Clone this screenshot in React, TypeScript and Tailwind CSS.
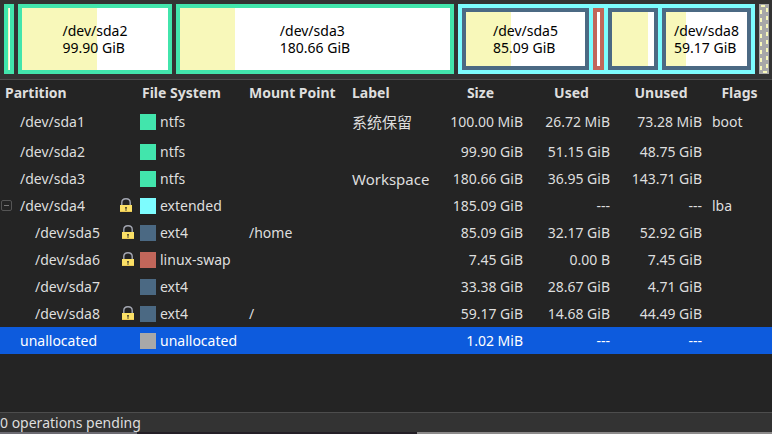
import { useState } from "react";

type Row = {
  name: string;
  child?: boolean;
  locked?: boolean;
  open?: boolean;
  swatch: string;
  fs: string;
  mount?: string;
  label?: string;
  size: string;
  used: string;
  unused: string;
  flags?: string;
};

const rows: Row[] = [
  { name: "/dev/sda1", swatch: "bg-[#42e5ac]", fs: "ntfs", label: "系统保留", size: "100.00 MiB", used: "26.72 MiB", unused: "73.28 MiB", flags: "boot" },
  { name: "/dev/sda2", swatch: "bg-[#42e5ac]", fs: "ntfs", size: "99.90 GiB", used: "51.15 GiB", unused: "48.75 GiB" },
  { name: "/dev/sda3", swatch: "bg-[#42e5ac]", fs: "ntfs", label: "Workspace", size: "180.66 GiB", used: "36.95 GiB", unused: "143.71 GiB" },
  { name: "/dev/sda4", locked: true, open: true, swatch: "bg-[#7dfcfe]", fs: "extended", size: "185.09 GiB", used: "---", unused: "---", flags: "lba" },
  { name: "/dev/sda5", child: true, locked: true, swatch: "bg-[#4b6983]", fs: "ext4", mount: "/home", size: "85.09 GiB", used: "32.17 GiB", unused: "52.92 GiB" },
  { name: "/dev/sda6", child: true, locked: true, swatch: "bg-[#c1665a]", fs: "linux-swap", size: "7.45 GiB", used: "0.00 B", unused: "7.45 GiB" },
  { name: "/dev/sda7", child: true, swatch: "bg-[#4b6983]", fs: "ext4", size: "33.38 GiB", used: "28.67 GiB", unused: "4.71 GiB" },
  { name: "/dev/sda8", child: true, locked: true, swatch: "bg-[#4b6983]", fs: "ext4", mount: "/", size: "59.17 GiB", used: "14.68 GiB", unused: "44.49 GiB" },
  { name: "unallocated", swatch: "bg-[#a8a8a8]", fs: "unallocated", size: "1.02 MiB", used: "---", unused: "---" },
];

function Block({ color, used, name, size }: { color: string; used: number; name?: string; size?: string }) {
  return (
    <div className={`grid min-w-0 border-4 bg-white ${color}`}>
      <div className="col-start-1 row-start-1 bg-[#f8f8ba]" style={{ width: `${used}%` }} />
      {name && (
        <div className="col-start-1 row-start-1 place-self-center whitespace-nowrap text-sm leading-[17px] text-black">
          <div>{name}</div>
          <div>{size}</div>
        </div>
      )}
    </div>
  );
}

function Lock() {
  return (
    <svg width="12" height="15" viewBox="0 0 12 15" aria-label="locked" role="img">
      <path d="M1.8 8V4.6C1.8 2 3.6 0.8 6 0.8s4.2 1.2 4.2 3.8V8" fill="none" stroke="#a4a7b2" strokeWidth="1.4" />
      <rect x="0" y="7" width="12" height="7" fill="#fbe066" />
      <rect x="0" y="13" width="12" height="1" fill="#ecca55" />
      <path d="M5 9h2v1.5h-.5V13h-1v-2.500H5z" fill="#5b5230" />
    </svg>
  );
}

export default function App() {
  const [open, setOpen] = useState(true);
  const [selected, setSelected] = useState("unallocated");
  const head = "px-[5px] font-bold";
  const cell = "px-[5px]";
  return (
    <div className="flex min-h-screen flex-col overflow-hidden bg-[#242424] font-['Noto_Sans','Noto_Sans_CJK_SC',sans-serif] text-sm leading-5 text-[#dedede]">
      <div className="grid h-[79px] shrink-0 grid-cols-[10px_154fr_278fr_297fr_10px] gap-1 bg-[#333333] pt-1 pr-[3px] pb-[5px] pl-1">
        <Block color="border-[#42e5ac]" used={50} />
        <Block color="border-[#42e5ac]" used={51.2} name="/dev/sda2" size="99.90 GiB" />
        <Block color="border-[#42e5ac]" used={20.4} name="/dev/sda3" size="180.66 GiB" />
        <div className="grid min-w-0 grid-cols-[127fr_11px_50fr_89fr] gap-1 bg-[#7dfcfe] p-1">
          <Block color="border-[#4b6983]" used={37.8} name="/dev/sda5" size="85.09 GiB" />
          <Block color="border-[#c1665a]" used={0} />
          <Block color="border-[#4b6983]" used={85.8} />
          <Block color="border-[#4b6983]" used={24.8} name="/dev/sda8" size="59.17 GiB" />
        </div>
        <svg width="10" height="70" viewBox="0 0 10 70" className="bg-[#a8a8a8]" role="img" aria-label="unallocated">
          <rect x="2" y="2" width="6" height="66" fill="none" stroke="#f8f8ba" strokeWidth="2" strokeDasharray="4 4" />
        </svg>
      </div>
      <main className="grow border-y border-[#4d4d4d]">
        <table className="w-full table-fixed border-collapse whitespace-nowrap">
          <colgroup>
            <col className="w-[137px]" />
            <col className="w-[107px]" />
            <col className="w-[103px]" />
            <col className="w-[86px]" />
            <col className="w-[95px]" />
            <col className="w-[87px]" />
            <col className="w-[92px]" />
            <col />
          </colgroup>
          <thead>
            <tr className="h-[25px]">
              <th className={`${head} text-left`}>Partition</th>
              <th className={`${head} text-left`}>File System</th>
              <th className={`${head} text-left`}>Mount Point</th>
              <th className={`${head} text-left`}>Label</th>
              <th className={`${head} text-center`}>Size</th>
              <th className={`${head} text-center`}>Used</th>
              <th className={`${head} text-center`}>Unused</th>
              <th className={`${head} text-center`}>Flags</th>
            </tr>
          </thead>
          <tbody>
            {rows
              .filter((r) => open || !r.child)
              .map((r) => (
                <tr
                  key={r.name}
                  onClick={() => setSelected(r.name)}
                  className={`${r.name === "/dev/sda1" ? "h-[33px]" : "h-[27px]"} ${selected === r.name ? "bg-[#0d5bdd] text-white" : ""}`}
                >
                  <td className="p-0">
                    <div className={`flex items-center ${r.child ? "pr-[3px] pl-[35px]" : "pr-[5px]"}`}>
                      {!r.child && (
                        <span className="flex w-5 shrink-0 items-center pl-px">
                          {r.open && (
                            <button
                              type="button"
                              aria-label="Toggle /dev/sda4"
                              aria-expanded={open}
                              onClick={() => setOpen(!open)}
                              className="flex size-[11px] items-center justify-center rounded-xs border border-[#555555]"
                            >
                              <span className="h-px w-[5px] bg-[#777777]" />
                            </button>
                          )}
                        </span>
                      )}
                      <span className="grow">{r.name}</span>
                      {r.locked && <Lock />}
                    </div>
                  </td>
                  <td className="p-0">
                    <div className="flex items-center gap-1 pl-[3px]">
                      <span className={`size-4 shrink-0 ${r.swatch}`} />
                      {r.fs}
                    </div>
                  </td>
                  <td className={cell}>{r.mount}</td>
                  <td className={`${cell} text-[15px]`}>{r.label}</td>
                  <td className={`${cell} text-right`}>{r.size}</td>
                  <td className={`${cell} text-right`}>{r.used}</td>
                  <td className={`${cell} text-right`}>{r.unused}</td>
                  <td className={cell}>{r.flags}</td>
                </tr>
              ))}
          </tbody>
        </table>
      </main>
      <footer className="bg-[#333333]">
        <div className="h-[19px] leading-5">0 operations pending</div>
        <div className="grid h-0.5 grid-cols-[137fr_280fr_355fr]">
          <span className="bg-[#6c6b72]" />
          <span className="bg-[#241f26]" />
          <span className="bg-[#8c8a8a]" />
        </div>
      </footer>
    </div>
  );
}
